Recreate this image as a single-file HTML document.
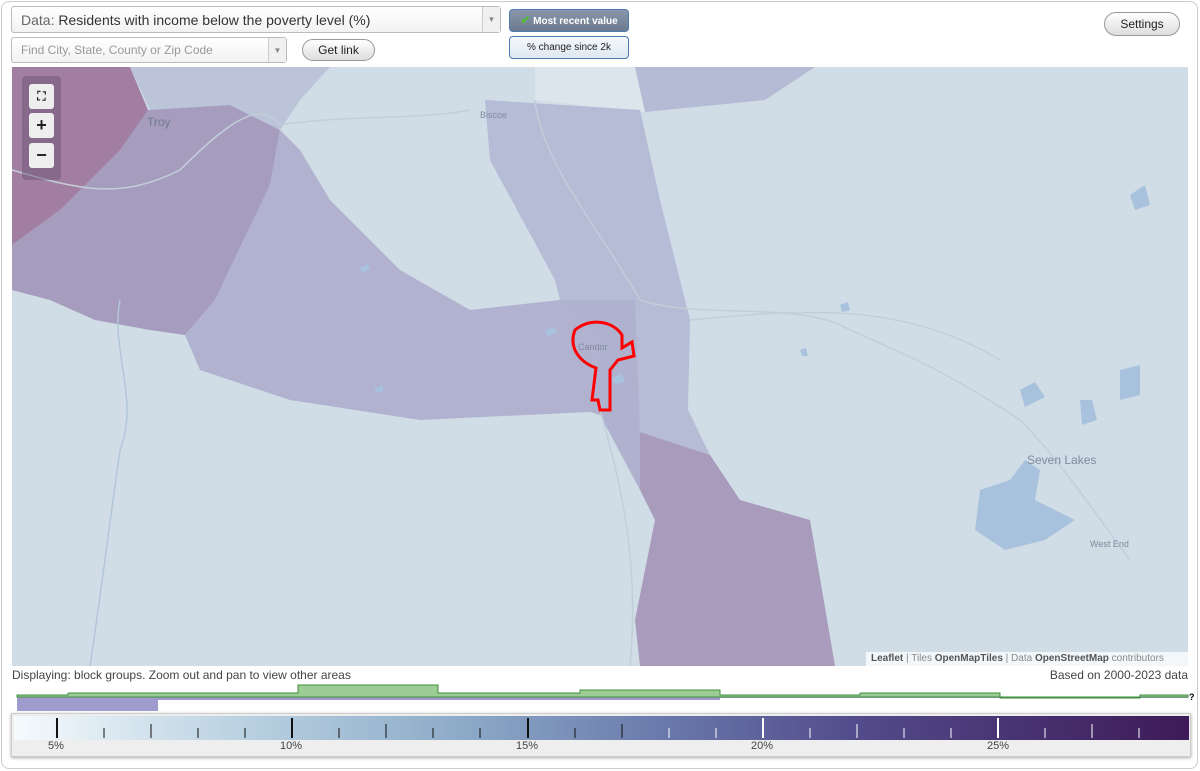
<!DOCTYPE html>
<html><head><meta charset="utf-8"><style>
*{box-sizing:border-box;margin:0;padding:0}
body{width:1200px;height:771px;background:#fff;font-family:"Liberation Sans",Arial,sans-serif;position:relative;overflow:hidden}
.frame{position:absolute;left:1px;top:1px;width:1197px;height:768px;border:1px solid #ccc;border-radius:8px}
.sel{position:absolute;border:1px solid #bbb;border-radius:3px;background:linear-gradient(#fff,#f2f2f2);color:#333}
.arrow{position:absolute;right:0;top:0;bottom:0;width:18px;border-left:1px solid #ccc;background:#f0f0f0;font-size:8px;color:#888;text-align:center}
.btn{position:absolute;border:1px solid #999;border-radius:12px;background:linear-gradient(#fff,#ddd);font-size:12px;text-align:center;color:#222}
.tog{position:absolute;left:509px;width:120px;border:1px solid #4d7ab0;border-radius:4px;font-size:10px;text-align:center}
.zb{position:absolute;left:29px;width:25px;height:25px;background:#eee;border-radius:3px;text-align:center;font-weight:bold;font-size:18px;line-height:24px;color:#222}
</style></head><body>
<div class="frame"></div>
<div class="sel" style="left:11px;top:6px;width:490px;height:27px;font-size:14px;line-height:26px;padding-left:9px"><span style="color:#666">Data:</span> Residents with income below the poverty level (%)<div class="arrow" style="line-height:26px">▼</div></div>
<div class="sel" style="left:11px;top:37px;width:276px;height:26px;font-size:12px;line-height:25px;padding-left:9px;color:#999">Find City, State, County or Zip Code<div class="arrow" style="line-height:25px">▼</div></div>
<div class="btn" style="left:302px;top:39px;width:73px;height:22px;line-height:21px">Get link</div>
<div class="tog" style="top:9px;height:23px;line-height:21px;background:linear-gradient(#8a97aa,#6b7a90);color:#fff;font-weight:bold"><span style="color:#5b3;font-size:12px">✔</span> Most recent value</div>
<div class="tog" style="top:36px;height:23px;line-height:21px;background:linear-gradient(#f4f8fc,#dfe8f0);color:#222">% change since 2k</div>
<div class="btn" style="left:1104px;top:12px;width:76px;height:24px;line-height:23px">Settings</div>

<svg style="position:absolute;left:12px;top:67px" width="1176" height="599" viewBox="12 67 1176 599">
<rect x="12" y="67" width="1176" height="599" fill="#d0dde6"/>
<polygon points="130,67 330,67 300,100 280,130 230,105 150,110" fill="#bbc4d8"/>
<polygon points="535,67 635,67 645,112 535,100" fill="#dde5ec"/>
<polygon points="635,67 815,67 765,100 645,112" fill="#b5bbd4"/>
<polygon points="12,245 60,210 148,110 230,105 280,130 270,185 215,300 185,335 150,330 95,320 50,300 12,290" fill="#a69dbe"/>
<polygon points="280,130 270,185 215,300 185,335 200,370 290,400 420,420 590,412 600,340 560,300 470,310 400,270 330,200 300,150" fill="#b1b2cf"/>
<polygon points="485,100 640,110 660,200 690,320 688,410 710,455 640,432 635,330 600,340 560,300 555,280 490,160" fill="#b6bbd6"/>
<polygon points="560,300 600,340 590,412 600,415 640,490 640,432 635,300" fill="#aeb2cf"/>
<polygon points="12,67 130,67 148,110 120,150 60,210 12,245" fill="#a27fa2"/>
<polygon points="640,432 710,455 740,500 810,520 835,666 640,666 635,620 655,520 640,490" fill="#a89bbb"/>
<g fill="none" stroke="#c2ced9" stroke-width="1.5">
<path d="M12,170 C80,190 120,200 180,170 230,120 260,100 280,125 340,115 420,120 470,110 530,110"/>
<path d="M535,100 C540,160 600,230 640,300 700,320 800,300 850,330 920,360 960,380 1020,420 1060,460 1100,520 1130,560"/>
<path d="M120,300 C110,350 140,400 120,450 110,520 100,600 90,666" stroke="#b3c6da"/>
<path d="M600,410 C620,480 640,560 630,666"/>
<path d="M690,320 C800,310 900,300 1000,360"/>
</g>
<g fill="#a8c2de">
<path d="M980,490 l30,-10 15,-20 15,10 -5,30 40,20 -30,20 -40,10 -30,-20 z"/>
<path d="M1120,370 l20,-5 0,30 -20,5 z"/><path d="M1020,390 l15,-8 10,15 -20,10z"/>
<path d="M1080,400 l12,0 5,20 -15,5z"/><path d="M1130,195 l15,-10 5,20 -15,5z"/>
<path d="M545,330 l10,-3 2,6 -10,3z"/><path d="M612,378 l10,-4 3,8 -10,2z"/><path d="M360,268 l8,-4 2,6 -8,2z"/><path d="M375,388 l8,-2 0,6 -8,0z"/><path d="M800,350 l6,-2 2,8 -6,0z"/><path d="M840,305 l8,-3 2,8 -8,2z"/>
</g>
<text x="147" y="126" font-size="12" fill="#6f7a8e" font-family="Liberation Sans">Troy</text>
<text x="480" y="118" font-size="9" fill="#7f8aa0" font-family="Liberation Sans">Biscoe</text>
<text x="578" y="350" font-size="9" fill="#7f8aa0" font-family="Liberation Sans">Candor</text>
<text x="1027" y="464" font-size="12" fill="#7f8aa0" font-family="Liberation Sans">Seven Lakes</text>
<text x="1090" y="547" font-size="9" fill="#7f8aa0" font-family="Liberation Sans">West End</text>
<path d="M575,330 C590,318 612,320 622,335 L622,348 L632,342 L634,356 L618,360 L610,370 L610,410 L600,410 L598,400 L592,400 L596,368 C580,362 568,348 575,330 Z" fill="none" stroke="#f00" stroke-width="3"/>
</svg>
<div style="position:absolute;left:22px;top:76px;width:39px;height:104px;background:rgba(100,80,110,.45);border-radius:4px"></div>
<div class="zb" style="top:84px;font-size:12px">⛶</div>
<div class="zb" style="top:113px">+</div>
<div class="zb" style="top:143px">−</div>
<div style="position:absolute;left:866px;top:652px;width:322px;height:14px;background:rgba(255,255,255,.75);font-size:10px;color:#888;line-height:14px;padding-left:5px"><b style="color:#555">Leaflet</b> | Tiles <b style="color:#555">OpenMapTiles</b> | Data <b style="color:#555">OpenStreetMap</b> contributors</div>
<div style="position:absolute;left:12px;top:668px;font-size:12px;color:#444">Displaying: block groups. Zoom out and pan to view other areas</div>
<div style="position:absolute;right:12px;top:668px;font-size:12px;color:#444">Based on 2000-2023 data</div>
<svg style="position:absolute;left:0;top:680px" width="1200" height="32">
<polygon points="17,17 158,17 158,31 17,31" fill="#9f9bcc"/>
<polygon points="158,17 580,17 580,20 158,20" fill="#9f9bcc"/>
<polygon points="580,17 720,17 720,20 580,20" fill="#9f9bcc"/>
<polygon points="720,17 1188,17 1188,18 720,18" fill="#9f9bcc"/>
<path d="M17,17 L17,15 L68,15 L68,13 L298,13 L298,5 L438,5 L438,13 L580,13 L580,10 L720,10 L720,15 L860,15 L860,13 L1000,13 L1000,18 L1140,18 L1140,15 L1188,15 L1188,17 Z" fill="#9ccb94" stroke="#3f8f3f" stroke-width="1"/>
<text x="1189" y="20" font-size="9" font-weight="bold">?</text>
</svg>
<div style="position:absolute;left:11px;top:713px;width:1180px;height:44px;background:#eee;border:1px solid #ccc;box-shadow:0 1px 3px #aaa"></div>
<div style="position:absolute;left:14px;top:716px;width:1175px;height:24px;background:linear-gradient(90deg,#f5fafd,#b8d0e0 20%,#8daac8 38%,#6a7aac 55%,#524a8a 72%,#3e1a58 100%)"></div>
<svg style="position:absolute;left:0;top:716px" width="1200" height="24">
<g stroke="#111"><path d="M57,2v20M292,2v20M528,2v20" stroke-width="2"/><path d="M104,12v10M151,8v14M198,12v10M245,12v10M339,12v10M386,8v14M433,12v10M480,12v10M575,12v10M622,8v14"/></g>
<g stroke="#fff"><path d="M763,2v20M998,2v20" stroke-width="2"/><path d="M669,12v10M716,12v10M810,12v10M857,8v14M904,12v10M951,12v10M1045,12v10M1092,8v14M1139,12v10"/></g>
</svg>
<div style="position:absolute;top:740px;font-size:11px;color:#444;left:48px">5%</div>
<div style="position:absolute;top:740px;font-size:11px;color:#444;left:280px">10%</div>
<div style="position:absolute;top:740px;font-size:11px;color:#444;left:516px">15%</div>
<div style="position:absolute;top:740px;font-size:11px;color:#444;left:751px">20%</div>
<div style="position:absolute;top:740px;font-size:11px;color:#444;left:987px">25%</div>
</body></html>
